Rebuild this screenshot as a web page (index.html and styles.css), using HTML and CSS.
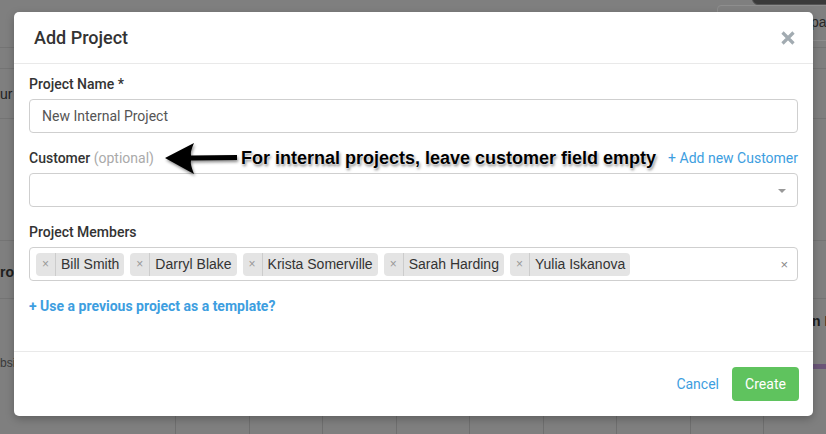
FILE: index.html
```html
<!DOCTYPE html>
<html>
<head>
<meta charset="utf-8">
<link rel="stylesheet" href="styles.css">
</head>
<body>
<div class="page">
  <div class="bg-topbox"><span>pa</span></div>
  <div class="bg-dark"></div>
  <div class="bg-line l1"></div>
  <div class="bg-line l2"></div>
  <div class="bg-line l3"></div>
  <div class="bg-line l4"></div>
  <div class="bg-line l5"></div>
  <div class="bg-text t1">ur</div>
  <div class="bg-text t2">ro</div>
  <div class="bg-text t3">bsi</div>
  <div class="bg-text t4">n I</div>
  <div class="bg-purple"></div>
  <div class="bg-cols">
    <span></span><span></span><span></span><span></span><span></span><span></span><span></span><span></span><span></span><span></span>
  </div>

  <div class="modal">
    <div class="modal-header">
      <h2 class="modal-title">Add Project</h2>
      <svg class="close" width="14" height="14" viewBox="0 0 14 14"><path d="M1.5 1.5 L12.5 12.5 M12.5 1.5 L1.5 12.5" stroke="#a2abb1" stroke-width="3.2" stroke-linecap="butt"/></svg>
    </div>
    <div class="modal-body">
      <div class="field">
        <div class="label-row"><label class="label">Project Name *</label></div>
        <div class="input">New Internal Project</div>
      </div>
      <div class="field">
        <div class="label-row">
          <label class="label">Customer <span class="optional">(optional)</span></label>
          <div class="annotation">
            <svg class="arrow" width="78" height="40" viewBox="0 0 78 40">
              <defs>
                <filter id="sh" x="-20%" y="-30%" width="140%" height="160%">
                  <feDropShadow dx="1" dy="2" stdDeviation="1.5" flood-color="#000" flood-opacity="0.45"/>
                </filter>
              </defs>
              <path d="M2 19 L31 4 Q27 13 28 16.5 L74 16 L74 21 L28 21.5 Q27 25 31 35 Z" fill="#000" filter="url(#sh)"/>
            </svg>
            <span class="note">For internal projects, leave customer field empty</span>
          </div>
          <a class="add-link">+ Add new Customer</a>
        </div>
        <div class="input select"><span class="caret"></span></div>
      </div>
      <div class="field">
        <div class="label-row"><label class="label">Project Members</label></div>
        <div class="input tags">
          <span class="tag"><span class="tx">×</span><span class="tn">Bill Smith</span></span>
          <span class="tag"><span class="tx">×</span><span class="tn">Darryl Blake</span></span>
          <span class="tag"><span class="tx">×</span><span class="tn">Krista Somerville</span></span>
          <span class="tag"><span class="tx">×</span><span class="tn">Sarah Harding</span></span>
          <span class="tag"><span class="tx">×</span><span class="tn">Yulia Iskanova</span></span>
          <span class="clear">×</span>
        </div>
      </div>
      <a class="template-link">+ Use a previous project as a template?</a>
    </div>
    <div class="modal-footer">
      <a class="cancel">Cancel</a>
      <button class="create">Create</button>
    </div>
  </div>
</div>
</body>
</html>
```

FILE: styles.css
```css
* { box-sizing: border-box; }
html, body { margin: 0; padding: 0; }
body {
  width: 826px;
  height: 434px;
  overflow: hidden;
  background: #7f7f7f;
  font-family: Roboto, "Liberation Sans", Arial, sans-serif;
}
.page { position: relative; width: 826px; height: 434px; }

/* dimmed page behind the modal */
.bg-topbox {
  position: absolute; left: 717px; top: 5px; width: 120px; height: 36px;
  border: 1px solid #8e8e8e; border-radius: 4px; background: #808080;
}
.bg-topbox span {
  position: absolute; left: 93px; top: 8px; font-size: 14px; color: #2a2a2a;
  font-family: "Liberation Sans", Arial, sans-serif;
}
.bg-dark {
  position: absolute; left: 752px; top: -10px; width: 90px; height: 15px;
  background: #3a3a3a; border-radius: 6px; border: 1px solid #555;
}
.bg-line { position: absolute; left: 0; width: 826px; height: 1px; background: #747474; }
.l1 { top: 47px; }
.l2 { top: 68px; }
.l3 { top: 118px; }
.l4 { top: 240px; }
.l5 { top: 298px; }
.bg-text {
  position: absolute; font-family: "Liberation Sans", Arial, sans-serif;
  font-size: 14px; color: #1e1e1e; white-space: nowrap;
}
.t1 { left: 0; top: 86px; }
.t2 { left: 0; top: 264px; font-weight: bold; }
.t3 { left: 0; top: 356px; color: #3a3a3a; font-size: 12px; }
.t4 { left: 812px; top: 313px; font-weight: bold; }
.bg-purple { position: absolute; left: 813px; top: 364px; width: 13px; height: 5px; background: #6a5578; }
.bg-cols { position: absolute; left: 0; top: 415px; width: 826px; height: 19px; display: flex; }
.bg-cols span { width: 73.5px; height: 19px; border-left: 1px solid #6f6f6f; flex: none; }
.bg-cols span:first-child { width: 175px; border-left: none; }

/* modal */
.modal {
  position: absolute; left: 14px; top: 12px; width: 799px; height: 404px;
  background: #fff; border-radius: 5px;
  display: flex; flex-direction: column;
  box-shadow: 0 3px 9px rgba(0,0,0,0.25);
}
.modal-header {
  height: 52px; padding: 0 18px 0 20px;
  display: flex; align-items: center; justify-content: space-between;
  border-bottom: 1px solid #e9e9e9;
}
.modal-title { margin: 0; font-size: 18px; font-weight: 500; color: #333; padding-top: 0; }
.close { display: block; margin-top: 1px; }

.modal-body { padding: 10px 15px 0; height: 287px; }
.field { margin-bottom: 15px; }
.label-row { display: flex; align-items: center; height: 20px; margin-bottom: 5px; position: relative; }
.label { font-size: 14px; font-weight: 500; color: #333; }
.optional { font-weight: 400; color: #aaa; }
.annotation { display: flex; align-items: center; margin-left: 9px; }
.arrow { display: block; margin-top: 1px; }
.note {
  font-family: "Liberation Sans", Arial, sans-serif; font-weight: bold; font-size: 18px;
  color: #000; margin-left: 0; letter-spacing: 0;
  text-shadow: 0 0 2px #fff, 0 0 2px #fff, 1px 2px 3px rgba(0,0,0,0.55);
}
.add-link { margin-left: auto; font-size: 14px; color: #3d9ee0; font-weight: 400; }

.input {
  height: 34px; border: 1px solid #cfcfcf; border-radius: 4px;
  padding: 0 12px; display: flex; align-items: center;
  font-size: 14px; color: #555;
}
.select { justify-content: flex-end; padding-right: 11px; }
.caret {
  width: 0; height: 0; border-left: 4px solid transparent; border-right: 4px solid transparent;
  border-top: 4px solid #999; margin-top: 1px;
}
.tags { padding: 0 6px; gap: 6px; font-family: "Liberation Sans", Arial, sans-serif; }
.tag {
  height: 23px; background: #e4e4e4; border-radius: 4px;
  display: flex; align-items: center; color: #333; font-size: 14px;
}
.tx {
  color: #999; font-size: 12px; width: 20px; text-align: center;
  border-right: 1px solid #ccc; height: 23px; line-height: 23px;
}
.tn { padding: 0 5px 0 5px; }
.clear { margin-left: auto; color: #888; font-size: 13px; padding-right: 3px; }

.template-link {
  display: block; font-size: 14px; font-weight: 700; color: #3d9ee0; line-height: 20px;
  margin-top: 0;
}

.modal-footer {
  flex: 1; border-top: 1px solid #e9e9e9;
  display: flex; align-items: center; justify-content: flex-end;
  padding: 0 14px 0 0; gap: 13px;
}
.cancel { font-size: 14px; color: #3d9ee0; }
.create {
  width: 67px; height: 34px; border: none; border-radius: 4px;
  background: #5fc35e; color: #fff; font-family: Roboto, sans-serif; font-size: 14px;
  padding: 0;
}
```
